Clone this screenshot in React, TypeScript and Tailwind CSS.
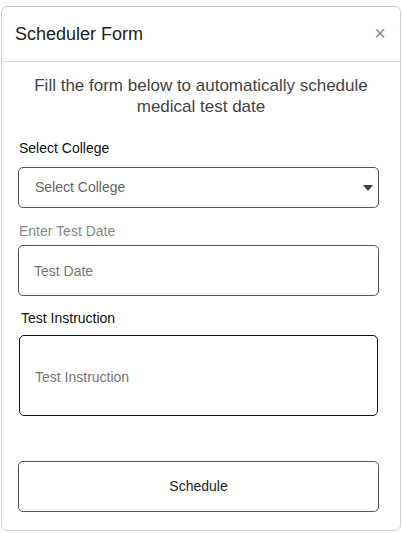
import { useState } from "react";

export default function App() {
  const [college, setCollege] = useState("");
  const [date, setDate] = useState("");
  const [notes, setNotes] = useState("");

  return (
    <div className="w-[402px] h-[533px] bg-white pt-[6px] pl-[1px] font-['Liberation_Sans',Arial,sans-serif]">
      <div className="w-[400px] h-[525px] border border-[#cfcfcf] rounded-[6px] bg-white">
        {/* header */}
        <div className="h-[55px] flex items-center justify-between pl-[13px] pr-[14px] border-b border-[#dedede]">
          <h2 className="text-[18px] text-[#222] leading-none">Scheduler Form</h2>
          <button className="text-[20px] leading-none text-[#8a8a8a] pb-[2px]">×</button>
        </div>

        {/* body */}
        <div className="pt-[13px]">
          <p className="text-center text-[17px] leading-[21px] text-[#444] px-[20px]">
            Fill the form below to automatically schedule medical test date
          </p>

          <div className="pl-[16px] mt-[21px]">
            <label className="block text-[14px] leading-[20px] text-[#111] pl-[1px]">Select College</label>
            <div className="relative mt-[9px] w-[361px]">
              <select
                value={college}
                onChange={(e) => setCollege(e.target.value)}
                className="w-full h-[41px] appearance-none border border-[#555] rounded-[5px] pl-[16px] text-[14px] text-[#666] bg-white outline-none"
              >
                <option value="">Select College</option>
              </select>
              <svg className="absolute right-[6px] top-[18px] pointer-events-none" width="10" height="6" viewBox="0 0 10 6">
                <path d="M0 0 L10 0 L5 6 Z" fill="#444" />
              </svg>
            </div>

            <label className="block mt-[13px] text-[14px] leading-[20px] text-[#888] pl-[1px]">Enter Test Date</label>
            <input
              value={date}
              onChange={(e) => setDate(e.target.value)}
              placeholder="Test Date"
              className="block mt-[4px] w-[361px] h-[51px] border border-[#555] rounded-[5px] pl-[15px] text-[14px] text-[#333] placeholder:text-[#777] outline-none"
            />

            <label className="block mt-[12px] text-[14px] leading-[20px] text-[#111] pl-[3px]">Test Instruction</label>
            <textarea
              value={notes}
              onChange={(e) => setNotes(e.target.value)}
              placeholder="Test Instruction"
              className="block mt-[7px] ml-[1px] w-[359px] h-[81px] border-[1.5px] border-[#111] rounded-[5px] pl-[15px] pt-[31px] text-[14px] leading-[20px] text-[#333] placeholder:text-[#777] outline-none resize-none"
            />

            <button className="block mt-[45px] w-[361px] h-[51px] border border-[#555] rounded-[5px] text-[14px] text-[#222] bg-white">
              Schedule
            </button>
          </div>
        </div>
      </div>
    </div>
  );
}
